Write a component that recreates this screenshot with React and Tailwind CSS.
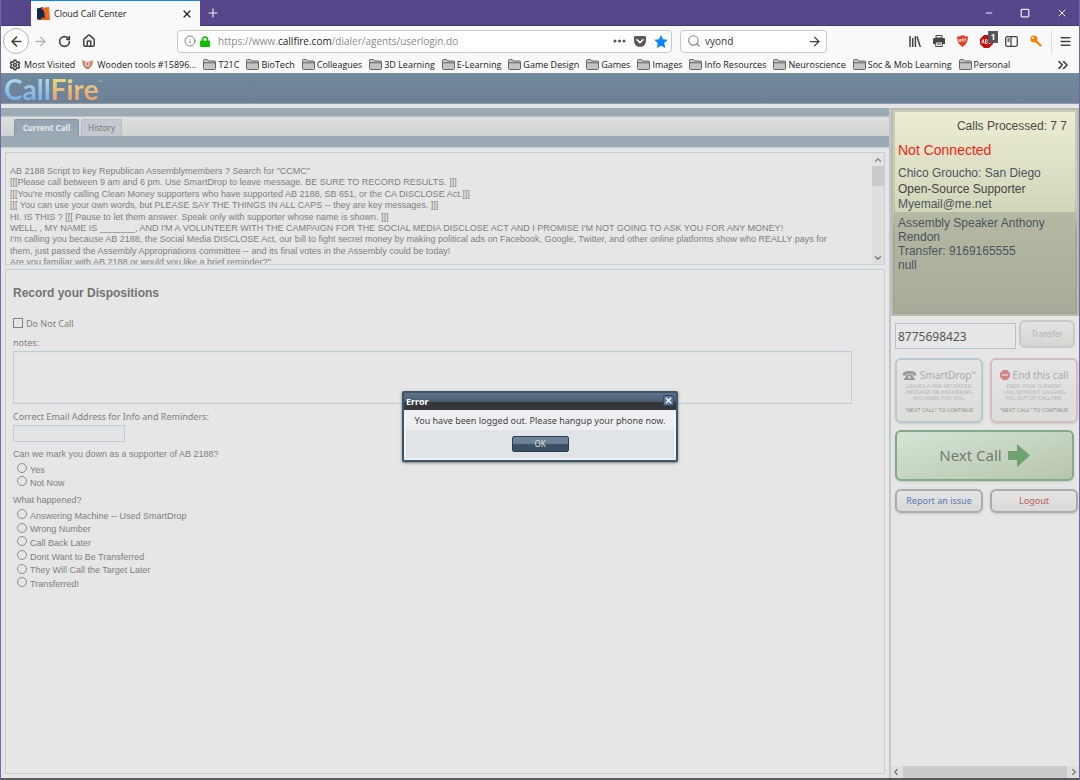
import React from "react";
import { RotateCw, House, Search, Settings, Minus, Square, X, Plus, ArrowLeft, ArrowRight, Info, ChevronUp, ChevronDown, ChevronLeft, ChevronRight, ChevronsRight, Menu } from "lucide-react";

const bookmarks = ["T21C", "BioTech", "Colleagues", "3D Learning", "E-Learning", "Game Design", "Games", "Images", "Info Resources", "Neuroscience", "Soc & Mob Learning", "Personal"];

const script = [
  "AB 2188 Script to key Republican Assemblymembers ? Search for \"CCMC\"",
  "[[[Please call between 9 am and 6 pm. Use SmartDrop to leave message. BE SURE TO RECORD RESULTS. ]]]",
  "[[[You're mostly calling Clean Money supporters who have supported AB 2188, SB 651, or the CA DISCLOSE Act.]]]",
  "[[[ You can use your own words, but PLEASE SAY THE THINGS IN ALL CAPS -- they are key messages. ]]]",
  "HI. IS THIS ? [[[ Pause to let them answer. Speak only with supporter whose name is shown. ]]]",
  "WELL, , MY NAME IS _______, AND I'M A VOLUNTEER WITH THE CAMPAIGN FOR THE SOCIAL MEDIA DISCLOSE ACT AND I PROMISE I'M NOT GOING TO ASK YOU FOR ANY MONEY!",
  "I'm calling you because AB 2188, the Social Media DISCLOSE Act, our bill to fight secret money by making political ads on Facebook, Google, Twitter, and other online platforms show who REALLY pays for",
  "them, just passed the Assembly Appropriations committee -- and its final votes in the Assembly could be today!",
  "Are you familiar with AB 2188 or would you like a brief reminder?\"",
];

const outcomes = ["Answering Machine -- Used SmartDrop", "Wrong Number", "Call Back Later", "Dont Want to Be Transferred", "They Will Call the Target Later", "Transferred!"];

function Folder() {
  return (
    <svg width="13" height="11" viewBox="0 0 13 11" className="shrink-0" aria-hidden="true">
      <path d="M.5 9.5v-8q0-1 1-1h2.700l1.300 1.500h6q1 0 1 1v6.500q0 1-1 1h-10q-1 0-1-1z" fill="#c4c4c4" stroke="#666" />
      <path d="M.5 3.800h12" stroke="#666" />
    </svg>
  );
}

function TitleBar() {
  return (
    <div className="flex h-[26px] items-stretch border-b border-[#43376f] bg-[#57478a] pl-[30px] text-[#ece8f5]">
      <div className="-mb-px flex w-[169px] items-center border-t border-[#0a84ff] bg-[#f9f9fa] pr-[7px] pl-1.5 text-[#222]">
        <svg width="13" height="13" viewBox="0 0 13 13" aria-hidden="true">
          <path d="M0 1.500L6 0v12L0 12.500z" fill="#13294b" />
          <path d="M4 1L12 0l1 13H0L4 10z" fill="#f26a21" />
          <path d="M4 1l3 3 1 8-2-2-3 3-2-1 2-4z" fill="#13294b" />
        </svg>
        <span className="ml-1 flex-1 text-[9px] leading-4">Cloud Call Center</span>
        <button aria-label="Close tab"><X size={12} strokeWidth={2.500} /></button>
      </div>
      <button aria-label="New tab" className="ml-1.5"><Plus size={14} strokeWidth={2} /></button>
      <div className="ml-auto flex items-center gap-[26px] pr-[11px]">
        <button aria-label="Minimize"><Minus size={10} strokeWidth={2.500} /></button>
        <button aria-label="Maximize"><Square size={10} strokeWidth={3} /></button>
        <button aria-label="Close window"><X size={12} strokeWidth={2} /></button>
      </div>
    </div>
  );
}

function NavBar() {
  return (
    <div className="flex h-[30px] items-center px-0.5 text-[#444]">
      <button aria-label="Back" className="flex size-[26px] items-center justify-center rounded-full border border-[#b4b4b4] bg-white"><ArrowLeft size={15} strokeWidth={2.500} /></button>
      <button aria-label="Forward" className="ml-1 text-[#b4b4b4]"><ArrowRight size={15} strokeWidth={2.200} /></button>
      <button aria-label="Reload" className="ml-2.5"><RotateCw size={13} strokeWidth={3} /></button>
      <button aria-label="Home" className="ml-[11px]"><House size={14} strokeWidth={2.600} /></button>
      <div className="ml-[81px] flex h-[23px] w-[136px] flex-auto items-center rounded-sm border border-[#c8c8c8] bg-white pr-[3px] pl-1.5">
        <Info size={12} strokeWidth={1.800} color="#777" className="shrink-0" />
        <svg width="10" height="11" viewBox="0 0 10 11" className="ml-1 shrink-0" aria-hidden="true"><path d="M2.500 5V3.500a2.500 2.500 0 015 0V5" fill="none" stroke="#12bc00" strokeWidth="1.700" /><rect y="4.500" width="10" height="6.500" rx="1" fill="#12bc00" /></svg>
        <div className="ml-2 flex-1 text-[10px] text-[#8a8a8a]">https://www.<span className="text-[#222]">callfire.com</span>/dialer/agents/userlogin.do</div>
        <svg width="13" height="4" viewBox="0 0 13 4" fill="#555" aria-hidden="true"><circle cx="2" cy="2" r="1.500" /><circle cx="6.500" cy="2" r="1.500" /><circle cx="11" cy="2" r="1.500" /></svg>
        <svg width="12" height="11" viewBox="0 0 12 11" className="ml-2" aria-hidden="true"><path d="M1.200 0h9.600Q12 0 12 1.200V5a6 6 0 01-12 0V1.200Q0 0 1.200 0z" fill="#5a5a5a" /><path d="M3 3.700l3 2.900 3-2.900" fill="none" stroke="#fff" strokeWidth="1.500" strokeLinecap="round" /></svg>
        <svg width="14" height="13" viewBox="0 0 24 23" className="ml-2" aria-hidden="true"><path d="M12 0l3.600 7.600 8.400 1-6.200 5.700L19.500 23 12 18.800 4.500 23l1.700-8.700L0 8.600l8.400-1z" fill="#0a84ff" /></svg>
      </div>
      <div className="ml-2 flex h-[23px] w-[147px] items-center rounded-sm border border-[#c8c8c8] bg-white px-1">
        <Search size={14} strokeWidth={2} color="#888" className="ml-0.5 shrink-0" />
        <input aria-label="Search" defaultValue="vyond" className="ml-1 w-10 flex-1 bg-transparent text-[10px] text-[#333] outline-none" />
        <button aria-label="Go"><ArrowRight size={15} strokeWidth={2} /></button>
      </div>
      <div className="ml-[82px] flex items-center gap-3">
        <svg width="12" height="11" viewBox="0 0 12 11" fill="none" stroke="#444" strokeWidth="1.500" aria-hidden="true"><path d="M1 0v11M3.700 2v9M6.400 0v11M8 .5L11.300 11" /></svg>
        <svg width="12" height="12" viewBox="0 0 12 12" aria-hidden="true"><path d="M3 .5h6V3H3z" fill="#f9f9fa" stroke="#444" /><path d="M0 4.200Q0 3 1.200 3h9.600Q12 3 12 4.200V9H0z" fill="#444" /><path d="M2.700 7h6.600v4.500H2.700z" fill="#fff" stroke="#444" /><path d="M4 9h4" stroke="#444" /></svg>
        <svg width="11" height="12" viewBox="0 0 11 12" aria-hidden="true"><path d="M0 1.500Q3 1.500 5.500 0 8 1.500 11 1.500 11 9 5.500 12 0 9 0 1.500z" fill="#df4330" /><path d="M2 4v2.500h1.500V4M5 6.500V4h1.200v2.500M7.200 4h1.500l-.8 2.500" stroke="#f9d0ca" fill="none" /></svg>
        <div className="relative">
          <svg width="13" height="13" viewBox="0 0 13 13" aria-hidden="true"><path d="M4 0h5l4 4v5l-4 4H4L0 9V4z" fill="#c70d12" /><path d="M1.800 8.500L3 4.500l1.200 4M5.500 4.500v4h1.200q1.400-1 0-2 1.200-1 0-2zM9 4.500v4h1q1.300-1 0-2 1.200-1 0-2z" stroke="#fff" strokeWidth=".9" fill="none" /></svg>
          <span className="absolute -top-1 left-2 h-3 w-2.5 bg-[#555] text-center text-[8px] leading-3 font-bold text-white">1</span>
        </div>
        <svg width="13" height="11" viewBox="0 0 13 11" fill="none" stroke="#444" strokeWidth="1.300" aria-hidden="true"><rect x=".7" y=".7" width="11.600" height="9.600" rx="1.500" /><path d="M6 1v9M2.500 3h2M2.500 5h2" /></svg>
        <svg width="12" height="12" viewBox="0 0 12 12" aria-hidden="true"><circle cx="4" cy="4" r="3.500" fill="#ff8000" /><path d="M5.500 5.500l5 5" stroke="#ff8000" strokeWidth="2.200" strokeLinecap="round" /><circle cx="3" cy="3" r="1" fill="#fff" /></svg>
      </div>
      <div className="ml-[9px] h-[25px] w-px bg-[#ddd]" />
      <button aria-label="Menu" className="mr-[5px] ml-[7px]"><Menu size={13} strokeWidth={2.600} /></button>
    </div>
  );
}

function Bookmarks() {
  return (
    <nav className="flex h-[17px] items-center gap-[7px] px-2 text-[9px] leading-4 whitespace-nowrap text-[#222]">
      <a href="#most" className="flex items-center gap-[3px]"><Settings size={12} strokeWidth={3} color="#444" />Most Visited</a>
      <a href="#tools" className="flex items-center gap-1">
        <svg width="11" height="9" viewBox="0 0 11 9" aria-hidden="true"><path d="M0 0l3 1.500h5L11 0 10 5.500 7 9H4L1 5.500z" fill="#b98b5e" /><circle cx="5.500" cy="4" r="2.500" fill="#f2c9d5" /><circle cx="5.500" cy="4" r="1" fill="#c2416b" /></svg>
        Wooden tools #15896...
      </a>
      {bookmarks.map((b) => <a key={b} href="#folder" className="flex items-center gap-0.5"><Folder />{b}</a>)}
      <button aria-label="More bookmarks" className="ml-auto"><ChevronsRight size={16} strokeWidth={2.400} color="#444" /></button>
    </nav>
  );
}

function Choice({ name, label }) {
  return (
    <label className="flex items-center gap-[3px]">
      <input type="radio" name={name} className="mb-1 size-[10px] shrink-0 appearance-none rounded-full border border-[#8c8c8c]" />
      {label}
    </label>
  );
}

function Workspace() {
  return (
    <main className="flex min-w-0 flex-1 flex-col">
      <div className="h-[9px] border-b border-[#bcc3c8] bg-[#9caab6]" />
      <div role="tablist" className="flex h-[19px] items-end gap-0.5 bg-linear-to-b from-[#dddfde] to-[#d2d4d3] pl-[13px] font-[Noto_Sans,sans-serif] text-[8px]">
        <button role="tab" aria-selected="true" className="h-[17px] w-[65px] rounded-t-xs border border-b-0 border-[#8795a3] bg-linear-to-b from-[#93a3b2] to-[#9caab6] font-bold text-[#e6e9ec]">Current Call</button>
        <button role="tab" aria-selected="false" className="h-[17px] w-[41px] rounded-t-xs border border-b-0 border-[#b4bec7] bg-[#c3c9ce] text-[#777]">History</button>
      </div>
      <div className="h-3 border-b border-[#c5ccd3] bg-[#9caab6]" />
      <div className="flex flex-1 flex-col gap-1 px-1 pt-1 pb-1">
        <section className="flex h-[113px] overflow-hidden border border-[#c6ced6]">
          <div className="mt-[13px] flex h-[102px] min-w-0 flex-1 flex-col justify-between pl-1 text-[9px] leading-[11px] whitespace-nowrap">
            {script.map((line) => <p key={line}>{line}</p>)}
          </div>
          <div className="flex w-3 flex-col items-center justify-between bg-[#dedede]">
            <div className="flex w-full flex-col items-center bg-[#e3e3e3] pt-0.5"><ChevronUp size={10} strokeWidth={3} color="#888" /><div className="mt-px h-5 w-full bg-[#cbcbcb]" /></div>
            <ChevronDown size={10} strokeWidth={3} color="#777" className="mb-px" />
          </div>
        </section>
        <form className="flex-1 border border-[#c6ced6] pl-[7px] text-[9px] leading-3">
          <h2 className="mt-[15px] text-[12px] leading-4 font-bold text-[#737373]">Record your Dispositions</h2>
          <label className="mt-[17px] flex items-center gap-[3px] font-[Noto_Sans,sans-serif]">
            <input type="checkbox" className="mb-0.5 size-[10px] appearance-none border border-[#808080]" />Do Not Call
          </label>
          <label htmlFor="notes" className="mt-[7px] block font-[Noto_Sans,sans-serif]">notes:</label>
          <textarea id="notes" className="mt-0.5 block h-[53px] w-[839px] max-w-[97%] resize-none border border-[#c2cad3] bg-linear-to-b from-[#e0e3e4] to-[#e6e6e6] to-10%" />
          <label htmlFor="email" className="mt-[7px] block font-[Noto_Sans,sans-serif]">Correct Email Address for Info and Reminders:</label>
          <input id="email" type="text" className="mt-0.5 block h-[17px] w-28 border border-[#c2cad3] bg-linear-to-b from-[#dfe2e4] to-[#e6e6e6]" />
          <fieldset className="mt-1.5">
            <legend>Can we mark you down as a supporter of AB 2188?</legend>
            <div className="mt-[3px] grid h-[27px] auto-rows-fr pl-1">
              <Choice name="support" label="Yes" /><Choice name="support" label="Not Now" />
            </div>
          </fieldset>
          <fieldset className="mt-1">
            <legend>What happened?</legend>
            <div className="mt-[3px] grid h-[82px] auto-rows-fr pl-1">
              {outcomes.map((o) => <Choice key={o} name="outcome" label={o} />)}
            </div>
          </fieldset>
        </form>
      </div>
    </main>
  );
}

function SidePanel() {
  return (
    <aside className="flex w-[190px] shrink-0 flex-col border-l-2 border-[#c1c7cd]">
      <section className="flex h-[208px] flex-col border-2 border-[#b9bbae] bg-linear-to-b from-[#cfd1bb] from-45% to-[#a4a697] to-60% text-[12px] leading-[14px] text-[#4b545d]">
        <div className="mx-0.5 mt-0.5 h-[100px] bg-linear-to-b from-[#ecedd3] to-[#d2d6b9] pl-[3px] shadow-[0_0_3px_#b9bba4]">
          <p className="pt-[7px] pr-2 text-right text-[#4a4a45]">Calls Processed: 7 7</p>
          <p className="mt-[9px] text-[14px] leading-4 text-[#f91b10]">Not Connected</p>
          <p className="mt-2">Chico Groucho: San Diego</p>
          <p className="mt-0.5 text-[#444]">Open-Source Supporter</p>
          <p className="mt-px">Myemail@me.net</p>
        </div>
        <div className="mx-0.5 mb-0.5 flex-1 bg-linear-to-b from-[#b5b9a3] to-[#a8ab99] pt-1 pl-[3px]">
          <p>Assembly Speaker Anthony Rendon</p>
          <p>Transfer: 9169165555</p>
          <p>null</p>
        </div>
      </section>
      <div className="px-1 pt-1 font-[Noto_Sans,sans-serif]">
        <div className="flex items-start gap-[3px]">
          <input aria-label="Transfer number" defaultValue="8775698423" className="mt-[3px] h-[26px] w-[121px] border border-[#b5c1cb] bg-[#e6e6e6] px-0.5 text-[12px] text-[#555]" />
          <button disabled className="h-7 w-[57px] rounded-md border-2 border-[#c9c9c9] bg-linear-to-b from-[#e3e3e3] to-[#d5d5d2] text-[8px] text-[#b2b2b2]">Transfer</button>
        </div>
        <div className="mt-[9px] flex gap-[7px] text-[#aaa]">
          <button disabled className="flex h-[65px] w-[88px] shrink-0 flex-col items-center rounded-md border-2 border-[#bec8d0] bg-linear-to-b from-[#e5e5e5] to-[#dcdcd9] pt-[7px] shadow-sm">
            <span className="flex items-center gap-[3px] text-[10px] leading-4 whitespace-nowrap">
              <svg width="15" height="9" viewBox="0 0 15 10" aria-hidden="true"><path d="M0 4Q0 0 7.500 0T15 4v1h-4V3H4v2H0zM5 4h5l4 6H1z" fill="#969696" /><circle cx="7.500" cy="7" r="1.500" fill="#ddd" /></svg>
              <span>SmartDrop<sup className="text-[6px]">™</sup></span>
            </span>
            <span className="font-[DejaVu_Sans,sans-serif] text-[5px] leading-[6px] whitespace-nowrap text-[#b3b3b3]">LEAVES A PRE-RECORDED<br />MESSAGE ON ANSWERING<br />MACHINES FOR YOU.</span>
            <span className="mt-1.5 font-[DejaVu_Sans,sans-serif] text-[5px] leading-[6px] whitespace-nowrap text-[#8c8c8c]">"NEXT CALL" TO CONTINUE</span>
          </button>
          <button disabled className="flex h-[65px] w-[88px] shrink-0 flex-col items-center rounded-md border-2 border-[#d3bfc2] bg-linear-to-b from-[#e5e5e5] to-[#dcdcd9] pt-[7px] shadow-sm">
            <span className="flex items-center gap-[3px] text-[10px] leading-4 whitespace-nowrap">
              <svg width="10" height="10" viewBox="0 0 10 10" aria-hidden="true"><path d="M3 0h4l3 3v4l-3 3H3L0 7V3z" fill="#cf8587" /><path d="M2 5h6" stroke="#e9c8c9" strokeWidth="2" strokeDasharray="1.200 .5" /></svg>
              End this call
            </span>
            <span className="font-[DejaVu_Sans,sans-serif] text-[5px] leading-[6px] whitespace-nowrap text-[#b3b3b3]">ENDS YOUR CURRENT<br />CALL WITHOUT LOGGING<br />YOU OUT OF CALLFIRE.</span>
            <span className="mt-1.5 font-[DejaVu_Sans,sans-serif] text-[5px] leading-[6px] whitespace-nowrap text-[#8c8c8c]">"NEXT CALL" TO CONTINUE</span>
          </button>
        </div>
        <button className="mt-[7px] flex h-[51px] w-[179px] items-center justify-center gap-1.5 rounded-md border-2 border-[#84a888] bg-linear-to-br from-[#d5e5d5] to-[#b7c5ae] text-[15px] text-[#737873] shadow-sm">
          Next Call
          <svg width="22" height="23" viewBox="0 0 22 23" aria-hidden="true"><path d="M0 7h9V0l13 11.500L9 23v-7H0z" fill="#6fa270" /></svg>
        </button>
        <div className="mt-2 flex gap-[7px] text-[9px]">
          <button className="h-6 w-[88px] shrink-0 rounded-md border-2 border-[#acacac] bg-linear-to-b from-[#e5e5e5] to-[#d9d9d7] text-[#5679b5] shadow-sm">Report an issue</button>
          <button className="h-6 w-[88px] shrink-0 rounded-md border-2 border-[#acacac] bg-linear-to-b from-[#e5e5e5] to-[#d9d9d7] text-[#b9595c] shadow-sm">Logout</button>
        </div>
      </div>
      <div className="mt-auto flex h-3 items-center bg-[#dfdfdf]">
        <ChevronLeft size={10} strokeWidth={3} color="#777" /><div className="mx-0.5 h-full flex-1 bg-[#cbcbcb]" /><ChevronRight size={10} strokeWidth={3} color="#777" />
      </div>
    </aside>
  );
}

function ErrorDialog() {
  return (
    <div role="dialog" aria-labelledby="error-title" className="absolute inset-x-0 top-[391px] mx-auto w-[276px] rounded-xs border-2 border-[#3f5468] bg-[#e0e4e7] font-[Noto_Sans,sans-serif] shadow-[0_1px_3px_#777]">
      <div className="flex h-[17px] items-center justify-between bg-linear-to-b from-[#5f7389] via-[#4a5c70] via-50% to-[#35363b] to-50% px-0.5">
        <h2 id="error-title" className="text-[9px] leading-4 font-bold text-white">Error</h2>
        <button aria-label="Close" className="mb-0.5 flex size-[11px] items-center justify-center rounded-xs border border-[#2e4862] bg-[#547797] text-white"><X size={9} strokeWidth={4} /></button>
      </div>
      <div className="border-2 border-t-0 border-[#f0f2f3]">
        <p className="bg-[#eeeff1] pt-0.5 text-center text-[9px] leading-[18px] text-[#444]">You have been logged out. Please hangup your phone now.</p>
        <div className="flex h-7 justify-center pt-1.5">
          <button className="h-4 w-[57px] rounded-xs border border-[#2b3d4f] bg-linear-to-b from-[#6d8298] from-45% to-[#3c5065] to-55% text-[8px] leading-3 text-[#dfe3e0]">OK</button>
        </div>
      </div>
    </div>
  );
}

export default function App() {
  return (
    <div className="relative flex min-h-screen flex-col border-x border-[#7367a6] bg-[#e6e6e6] font-[Liberation_Sans,Arial,sans-serif] text-[#7f7f7f]">
      <header className="bg-[#f9f9fa] font-[Open_Sans,sans-serif]">
        <TitleBar />
        <NavBar />
        <Bookmarks />
      </header>
      <div className="flex h-[31px] items-center border-t border-b border-t-[#7f8b92] border-b-[#8f9ba6] bg-linear-to-b from-[#6f899d] to-[#6e8095] pl-[3px]">
        <div className="flex items-center font-[Lato,sans-serif] text-[28px] leading-[30px]">
          <span className="bg-linear-to-b from-[#aed6e8] from-20% to-[#7cb4ee] to-80% bg-clip-text font-bold text-transparent">Call</span>
          <span className="bg-linear-to-b from-[#e6d97e] from-20% to-[#eba274] to-80% bg-clip-text font-bold text-transparent">Fire</span>
          <sup className="mb-2 text-[5px] text-[#c8cdd2]">™</sup>
        </div>
      </div>
      <div className="h-1 shrink-0 bg-[#e4e4e7]" />
      <div className="flex flex-1">
        <Workspace />
        <SidePanel />
      </div>
      <div className="h-0.5 bg-[#5b5b5f]" />
      <ErrorDialog />
    </div>
  );
}
